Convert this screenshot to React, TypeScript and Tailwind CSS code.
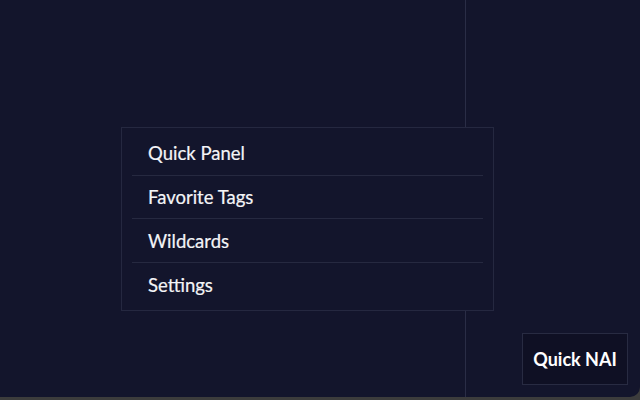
import { useState } from 'react'

const items = ['Quick Panel', 'Favorite Tags', 'Wildcards', 'Settings']

export default function App() {
  const [active, setActive] = useState<string | null>(null)

  return (
    <div
      className="h-[400px] w-[640px] overflow-hidden bg-[#3c3c3c] text-white"
      style={{ fontFamily: '"Lato", "Noto Sans", sans-serif' }}
    >
      <div className="relative flex h-[397px] rounded-br-[10px] bg-[#13152c]">
        <div className="w-[466px] shrink-0 border-r border-[#2a2d46]" />
        <div className="flex-1" />

        {/* popup menu */}
        <div className="absolute left-[121px] top-[127px] w-[373px] border border-[#252840] bg-[#13152c] px-[10px] py-[4px]">
          {items.map((label, i) => (
            <button
              key={label}
              onClick={() => setActive(label)}
              className={`flex h-[43.6px] w-full items-center px-[16px] pt-[2px] text-left text-[18.5px] text-[#f4f4f7] [-webkit-text-stroke:0.2px_#f4f4f7] ${
                i < items.length - 1 ? 'border-b border-[#262940]' : ''
              } ${active === label ? 'bg-[#1b1e38]' : ''}`}
            >
              {label}
            </button>
          ))}
        </div>

        {/* floating button */}
        <button className="absolute left-[522px] top-[333px] flex h-[52px] w-[106px] items-center justify-center border border-[#282b42] bg-[#0f1024] text-[18px] font-bold text-white">
          Quick NAI
        </button>
      </div>
    </div>
  )
}
